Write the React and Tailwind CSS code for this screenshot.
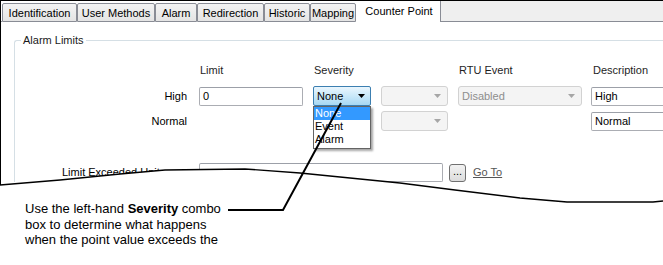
import React from 'react';

const tabs = [
    { label: 'Identification', w: 'w-[75px]' },
    { label: 'User Methods', w: 'w-[78px]' },
    { label: 'Alarm', w: 'w-[42px]' },
    { label: 'Redirection', w: 'w-[67px]' },
    { label: 'Historic', w: 'w-[46px]' },
    { label: 'Mapping', w: 'w-[46px]' },
];

function Arrow({ disabled }) {
    return (
        <svg width="7" height="4" viewBox="0 0 7 4" className="shrink-0">
            <path d="M0 0 L7 0 L3.5 4 Z" fill={disabled ? '#a6a6a6' : '#000'} />
        </svg>
    );
}

function TextBox({ value, className = '' }) {
    return (
        <div className={`h-[19px] border border-[#abadb3] border-t-[#9ca0a8] rounded-[2px] bg-white pl-[3px] leading-[17px] ${className}`}>
            {value}
        </div>
    );
}

function DisabledCombo({ value = '', className = '' }) {
    return (
        <div className={`h-[20px] flex items-center justify-between border border-[#d2d2d2] rounded-[3px] bg-[#f4f4f4] pl-[3px] pr-[6px] text-[#8e8e8e] ${className}`}>
            <span>{value}</span>
            <Arrow disabled />
        </div>
    );
}

export default function App() {
    return (
        <div className="relative w-[663px] h-[265px] overflow-hidden bg-white font-['Liberation_Sans',Arial,sans-serif] text-[11px] text-black">
            <div className="h-full border-l border-t border-black">
                {/* tab strip */}
                <div className="flex items-end h-[21px]">
                    <div className="w-px h-[19px] border-b border-[#898c95]" />
                    {tabs.map((t) => (
                        <div
                            key={t.label}
                            className={`${t.w} h-[19px] border border-[#898c95] rounded-t-[2px] bg-gradient-to-b from-[#f3f3f3] to-[#e4e4e4] text-center leading-[18px]`}
                        >
                            {t.label}
                        </div>
                    ))}
                    <div className="w-[84px] h-[21px] bg-white text-center leading-[20px] pl-[2px]">Counter Point</div>
                    <div className="flex-1 h-[21px] border-l border-b border-[#898c95] bg-[#efefef]" />
                </div>

                <fieldset className="ml-[13px] mt-[12px] border-t border-l border-[#d5dfe5] rounded-tl-[3px]">
                    <legend className="ml-[6px] px-[2px] leading-[13px] text-[#1a1a1a]">Alarm Limits</legend>

                    {/* headings */}
                    <div className="flex mt-[17px] h-[13px] leading-[13px] text-[#1e1e1e]">
                        <div className="w-[185px]" />
                        <div className="w-[114px]">Limit</div>
                        <div className="w-[145px]">Severity</div>
                        <div className="w-[134px]">RTU Event</div>
                        <div>Description</div>
                    </div>

                    {/* High */}
                    <div className="flex items-center mt-[9px] h-[20px]">
                        <div className="w-[172px] text-right">High</div>
                        <TextBox value="0" className="ml-[12px] w-[104px]" />
                        <div className="relative ml-[10px] w-[58px]">
                            <div className="h-[20px] flex items-center justify-between border border-[#3c7fb1] rounded-[2px] bg-gradient-to-b from-[#eaf6fd] via-[#c9e8f9] to-[#a7d8f3] pl-[3px] pr-[5px]">
                                <span>None</span>
                                <Arrow />
                            </div>
                            <div className="absolute left-0 top-[20px] w-[58px] border border-[#646464] bg-white shadow-[2px_2px_2px_rgba(0,0,0,0.35)] leading-[13px] z-10">
                                <div className="bg-[#3399ff] text-white pl-px">None</div>
                                <div className="pl-px">Event</div>
                                <div className="pl-px pb-[2px]">Alarm</div>
                            </div>
                        </div>
                        <DisabledCombo className="ml-[10px] w-[67px]" />
                        <DisabledCombo value="Disabled" className="ml-[10px] w-[124px]" />
                        <TextBox value="High" className="ml-[9px] w-[100px]" />
                    </div>

                    {/* Normal */}
                    <div className="flex items-center mt-[5px] h-[20px]">
                        <div className="w-[172px] text-right">Normal</div>
                        <div className="ml-[12px] w-[104px]" />
                        <div className="ml-[10px] w-[58px]" />
                        <DisabledCombo className="ml-[10px] w-[67px]" />
                        <div className="ml-[10px] w-[124px]" />
                        <TextBox value="Normal" className="ml-[9px] w-[100px]" />
                    </div>

                    {/* Limit exceeded */}
                    <div className="flex items-center mt-[32px] h-[19px]">
                        <div className="w-[172px] pl-[47px]">Limit Exceeded Unit</div>
                        <TextBox className="ml-[12px] w-[244px]" />
                        <div className="ml-[6px] w-[17px] h-[18px] border border-[#707070] rounded-[3px] bg-gradient-to-b from-[#f2f2f2] to-[#dcdcdc] text-center leading-[12px]">...</div>
                        <div className="ml-[7px] underline text-[#555]">Go To</div>
                    </div>
                </fieldset>
            </div>

            {/* torn edge and callout */}
            <svg className="absolute inset-0 pointer-events-none z-20" width="663" height="265" viewBox="0 0 663 265">
                <path
                    d="M0 185 L60 180 L120 174 L165 170 L245 169 L300 173 L340 177 L400 183 L455 190 L520 198 L567 202 L653 202 L663 201 L663 265 L0 265 Z"
                    fill="#fff"
                />
                <path
                    d="M0 185 L60 180 L120 174 L165 170 L245 169 L300 173 L340 177 L400 183 L455 190 L520 198 L567 202 L653 202 L663 201"
                    fill="none"
                    stroke="#000"
                    strokeWidth="1.4"
                />
                <polyline points="228,210 283,210 341,103" fill="none" stroke="#000" strokeWidth="2" />
            </svg>

            <div className="absolute left-[25px] top-[201px] z-30 font-['Liberation_Sans',Arial,sans-serif] text-[13px] leading-[15.5px] text-black">
                <div>Use the left-hand <b>Severity</b> combo</div>
                <div>box to determine what happens</div>
                <div>when the point value exceeds the</div>
            </div>
        </div>
    );
}
